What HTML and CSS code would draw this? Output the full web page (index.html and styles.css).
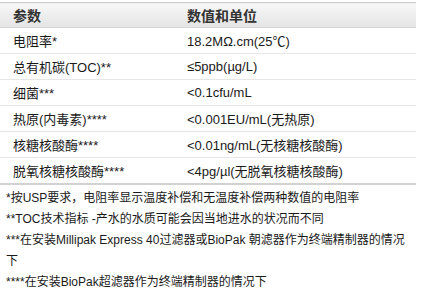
FILE: index.html
```html
<!DOCTYPE html>
<html>
<head>
<meta charset="utf-8">
<link rel="stylesheet" href="styles.css">
</head>
<body>
<table class="spec">
  <thead>
    <tr><th class="c1">参数</th><th class="c2">数值和单位</th></tr>
  </thead>
  <tbody>
    <tr><td class="c1">电阻率*</td><td class="c2">18.2MΩ.cm(25℃)</td></tr>
    <tr><td class="c1">总有机碳(TOC)**</td><td class="c2">≤5ppb(µg/L)</td></tr>
    <tr><td class="c1">细菌***</td><td class="c2">&lt;0.1cfu/mL</td></tr>
    <tr><td class="c1">热原(内毒素)****</td><td class="c2">&lt;0.001EU/mL(无热原)</td></tr>
    <tr><td class="c1">核糖核酸酶****</td><td class="c2">&lt;0.01ng/mL(无核糖核酸酶)</td></tr>
    <tr><td class="c1">脱氧核糖核酸酶****</td><td class="c2">&lt;4pg/µl(无脱氧核糖核酸酶)</td></tr>
  </tbody>
</table>
<div class="notes">
  <p>*按USP要求，电阻率显示温度补偿和无温度补偿两种数值的电阻率</p>
  <p>**TOC技术指标 -产水的水质可能会因当地进水的状况而不同</p>
  <p>***在安装Millipak Express 40过滤器或BioPak 朝滤器作为终端精制器的情况下</p>
  <p>****在安装BioPak超滤器作为终端精制器的情况下</p>
</div>
</body>
</html>
```
FILE: styles.css
```css
html, body {
  margin: 0;
  padding: 0;
  background: #ffffff;
}
body {
  font-family: "Liberation Sans", "Noto Sans CJK SC", sans-serif;
  color: #1a1a1a;
}
.spec {
  width: 416px;
  margin-top: 2px;
  border-collapse: collapse;
  border-top: 1px solid #cfcfcf;
  border-bottom: 2px solid #d2d2d2;
  font-size: 13px;
}
.spec th {
  height: 24px;
  padding: 0;
  text-align: left;
  font-weight: bold;
  font-size: 14px;
  color: #333333;
  background: linear-gradient(#f7f7f7, #e4e4e4);
  border-bottom: 1px solid #d6d6d6;
}
.spec td {
  height: 25px;
  padding: 0;
  border-bottom: 1px solid #e6e6e6;
}
.spec tbody tr:last-child td {
  border-bottom: none;
}
.c1 {
  width: 174px;
  padding-left: 13px !important;
}
.notes {
  padding-left: 6px;
  margin-top: 3px;
  font-size: 12px;
  color: #1a1a1a;
}
.notes p {
  margin: 0;
  line-height: 21px;
  width: 400px;
}
```
